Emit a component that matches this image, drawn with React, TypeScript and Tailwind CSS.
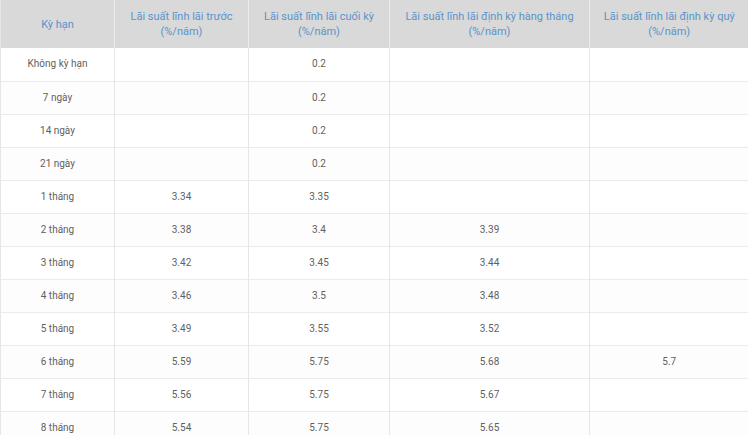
const headers = [
  ["Kỳ hạn"],
  ["Lãi suất lĩnh lãi trước", "(%/năm)"],
  ["Lãi suất lĩnh lãi cuối kỳ", "(%/năm)"],
  ["Lãi suất lĩnh lãi định kỳ hàng tháng", "(%/năm)"],
  ["Lãi suất lĩnh lãi định kỳ quý", "(%/năm)"],
];

const widths = ["w-[114px]", "w-[134px]", "w-[141px]", "w-[200px]", "w-[159px]"];

const rows = [
  ["Không kỳ hạn", "", "0.2", "", ""],
  ["7 ngày", "", "0.2", "", ""],
  ["14 ngày", "", "0.2", "", ""],
  ["21 ngày", "", "0.2", "", ""],
  ["1 tháng", "3.34", "3.35", "", ""],
  ["2 tháng", "3.38", "3.4", "3.39", ""],
  ["3 tháng", "3.42", "3.45", "3.44", ""],
  ["4 tháng", "3.46", "3.5", "3.48", ""],
  ["5 tháng", "3.49", "3.55", "3.52", ""],
  ["6 tháng", "5.59", "5.75", "5.68", "5.7"],
  ["7 tháng", "5.56", "5.75", "5.67", ""],
  ["8 tháng", "5.54", "5.75", "5.65", ""],
];

export default function App() {
  return (
    <div className="w-[748px] h-[435px] overflow-hidden bg-white font-['Roboto',sans-serif]">
      <table className="w-[748px] table-fixed border-collapse">
        <thead>
          <tr className="h-[48px] bg-[#d9d9d9]">
            {headers.map((h, i) => (
              <th
                key={i}
                className={`${widths[i]} border-l border-[#ececec] first:border-l-[#e6e6e6] px-1 text-center align-middle text-[11px] font-normal leading-[15px] text-[#5b93cb]`}
              >
                {h.map((line, j) => (
                  <div key={j}>{line}</div>
                ))}
              </th>
            ))}
          </tr>
        </thead>
        <tbody>
          {rows.map((r, i) => (
            <tr key={i} className="h-[33px] border-b border-[#ebebeb] odd:bg-white even:bg-[#fdfdfd]">
              {r.map((c, j) => (
                <td
                  key={j}
                  className="border-l border-[#e6e6e6] text-center align-middle text-[10px] leading-[12px] text-[#5f5f5f]"
                >
                  {c}
                </td>
              ))}
            </tr>
          ))}
        </tbody>
      </table>
    </div>
  );
}
